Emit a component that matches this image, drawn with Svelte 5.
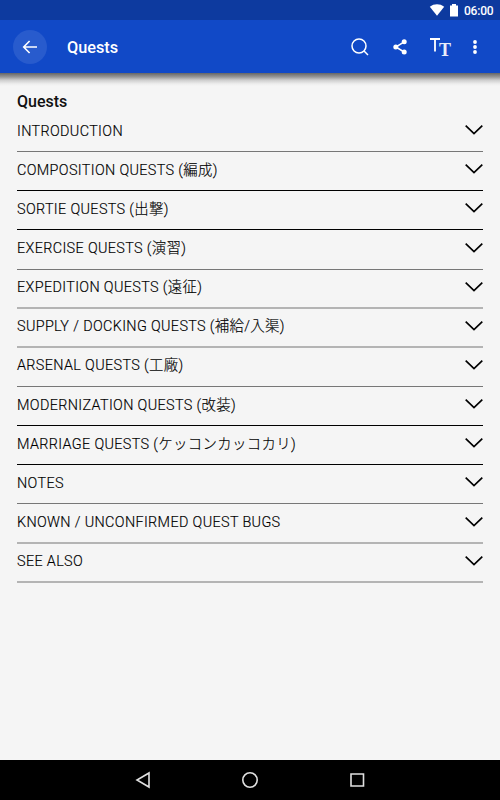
<script>
	// line is the colour of the rule, size its height in px
	const sections = [
		{ title: "INTRODUCTION", line: "#777", size: 1 },
		{ title: "COMPOSITION QUESTS (編成)", line: "#000", size: 1 },
		{ title: "SORTIE QUESTS (出撃)", line: "#000", size: 1 },
		{ title: "EXERCISE QUESTS (演習)", line: "#777", size: 1 },
		{ title: "EXPEDITION QUESTS (遠征)", line: "#b4b4b4", size: 2 },
		{ title: "SUPPLY / DOCKING QUESTS (補給/入渠)", line: "#b4b4b4", size: 2 },
		{ title: "ARSENAL QUESTS (工廠)", line: "#777", size: 1 },
		{ title: "MODERNIZATION QUESTS (改装)", line: "#000", size: 1 },
		{ title: "MARRIAGE QUESTS (ケッコンカッコカリ)", line: "#000", size: 1 },
		{ title: "NOTES", line: "#777", size: 1 },
		{ title: "KNOWN / UNCONFIRMED QUEST BUGS", line: "#b4b4b4", size: 2 },
		{ title: "SEE ALSO", line: "#b4b4b4", size: 2 },
	];
</script>

<div class="screen">
	<div class="status-bar">
		<svg class="wifi" width="16" height="12" viewBox="0 0 16 12"><path d="M.8 2.8C5 -.5 11 -.5 15.2 2.8L8 11.8Z" fill="#fff" /></svg>
		<svg class="battery" width="8" height="13" viewBox="0 0 8 13"><path d="M0 1.5h2V0h4v1.5h2V12.5H0Z" fill="#fff" /></svg>
		<span>06:00</span>
	</div>
	<header class="toolbar">
		<button class="back" aria-label="Back">
			<svg width="16" height="14" viewBox="0 0 16 14"><path d="M15 7H2M7.6 1L1.7 7l5.9 6" fill="none" stroke="#fff" stroke-width="1.6" /></svg>
		</button>
		<h1>Quests</h1>
		<button class="search" aria-label="Search">
			<svg width="18" height="18" viewBox="0 0 18 18"><circle cx="8" cy="8" r="7" /><path d="M12.8 12.8l4.2 4.2" /></svg>
		</button>
		<button class="share" aria-label="Share">
			<svg width="14" height="16" viewBox="0 0 14 16">
				<path d="M11.2 2.8L2.8 8l8.4 5" fill="none" stroke="#fff" stroke-width="1.5" />
				<g fill="#fff"><circle cx="11.2" cy="2.8" r="2.5" /><circle cx="2.8" cy="8" r="2.5" /><circle cx="11.2" cy="13" r="2.5" /></g>
			</svg>
		</button>
		<button class="text-size" aria-label="Text size">
			<svg width="22" height="24" viewBox="0 0 22 24">
				<path d="M0 4h10M5 4v12.6" fill="none" stroke="#fff" stroke-width="1.8" />
				<text x="9" y="20.5" textLength="12" lengthAdjust="spacingAndGlyphs">T</text>
			</svg>
		</button>
		<button class="more" aria-label="More">
			<svg width="4" height="14" viewBox="0 0 4 14" fill="#fff"><circle cx="2" cy="2" r="1.9" /><circle cx="2" cy="7" r="1.9" /><circle cx="2" cy="12" r="1.9" /></svg>
		</button>
	</header>
	<main>
		<h2>Quests</h2>
		{#each sections as section}
			<div class="section">
				<div class="row">
					<span>{section.title}</span>
					<svg width="18" height="10" viewBox="0 0 18 10"><path d="M.7 .7L9 8.5L17.3 .7" fill="none" stroke="#000" stroke-width="1.7" /></svg>
				</div>
				<div class="line" style="height: {section.size}px; background: {section.line}"></div>
			</div>
		{/each}
	</main>
	<nav>
		<svg width="16" height="18" viewBox="0 0 16 18"><path d="M14 2v14L2 9Z" /></svg>
		<svg width="16" height="16" viewBox="0 0 16 16"><circle cx="8" cy="8" r="7.2" /></svg>
		<svg width="16" height="16" viewBox="0 0 16 16"><path d="M2 2h12.5v12H2Z" /></svg>
	</nav>
</div>

<style>
	.screen {
		display: flex;
		flex-direction: column;
		height: 800px;
		background: #f5f5f5;
		font-family: Roboto, "Noto Sans CJK JP", sans-serif;
	}
	.status-bar {
		display: flex;
		align-items: center;
		justify-content: flex-end;
		flex: none;
		height: 20px;
		padding-right: 6px;
		background: #0d3a9f;
		color: #fff;
		font-size: 12px;
		font-weight: 500;
	}
	.status-bar span {
		width: 30px;
		margin-top: 1px;
		letter-spacing: -0.2px;
	}
	.wifi {
		margin-right: 5px;
	}
	.battery {
		margin-right: 6px;
	}
	.toolbar {
		display: flex;
		align-items: center;
		flex: none;
		height: 53px;
		padding: 0 23px 0 13px;
		background: #1149c7;
	}
	button {
		display: flex;
		align-items: center;
		justify-content: center;
		border: none;
		padding: 0;
		background: none;
	}
	.back {
		width: 34px;
		height: 34px;
		border-radius: 50%;
		background: #285bcd;
	}
	h1 {
		flex: 1;
		margin: 2px 0 0 20px;
		color: #fff;
		font-size: 16.3px;
		font-weight: 500;
	}
	.search {
		margin-right: 24px;
		fill: none;
		stroke: #fff;
		stroke-width: 1.5;
	}
	.share {
		margin-right: 23px;
	}
	.text-size {
		margin-right: 21px;
	}
	.text-size text {
		fill: #e8edfa;
		font: bold 18px "Liberation Serif", serif;
	}
	main {
		flex: 1;
		padding: 18px 17px 0;
		background: linear-gradient(#666 0, #999 4px, #ccc 7px, #eee 11px, #f5f5f5 13px);
	}
	h2 {
		margin: 0;
		font-size: 16px;
		font-weight: 500;
		line-height: 22px;
		color: #111;
	}
	.section {
		display: flex;
		flex-direction: column;
		height: 39.15px;
	}
	.row {
		display: flex;
		align-items: flex-start;
		justify-content: space-between;
		flex: 1;
		padding-top: 8.6px;
		color: #000;
		font-size: 14.4px;
		font-weight: 300;
		letter-spacing: 0.35px;
		line-height: 20px;
		-webkit-text-stroke: 0.15px #000;
	}
	.row svg {
		margin-top: 3.6px;
	}
	.line {
		flex: none;
	}
	nav {
		display: flex;
		align-items: center;
		justify-content: space-between;
		flex: none;
		height: 40px;
		padding: 0 135px;
		background: #000;
		fill: none;
		stroke: #e0e0e0;
		stroke-width: 1.6;
	}
</style>
